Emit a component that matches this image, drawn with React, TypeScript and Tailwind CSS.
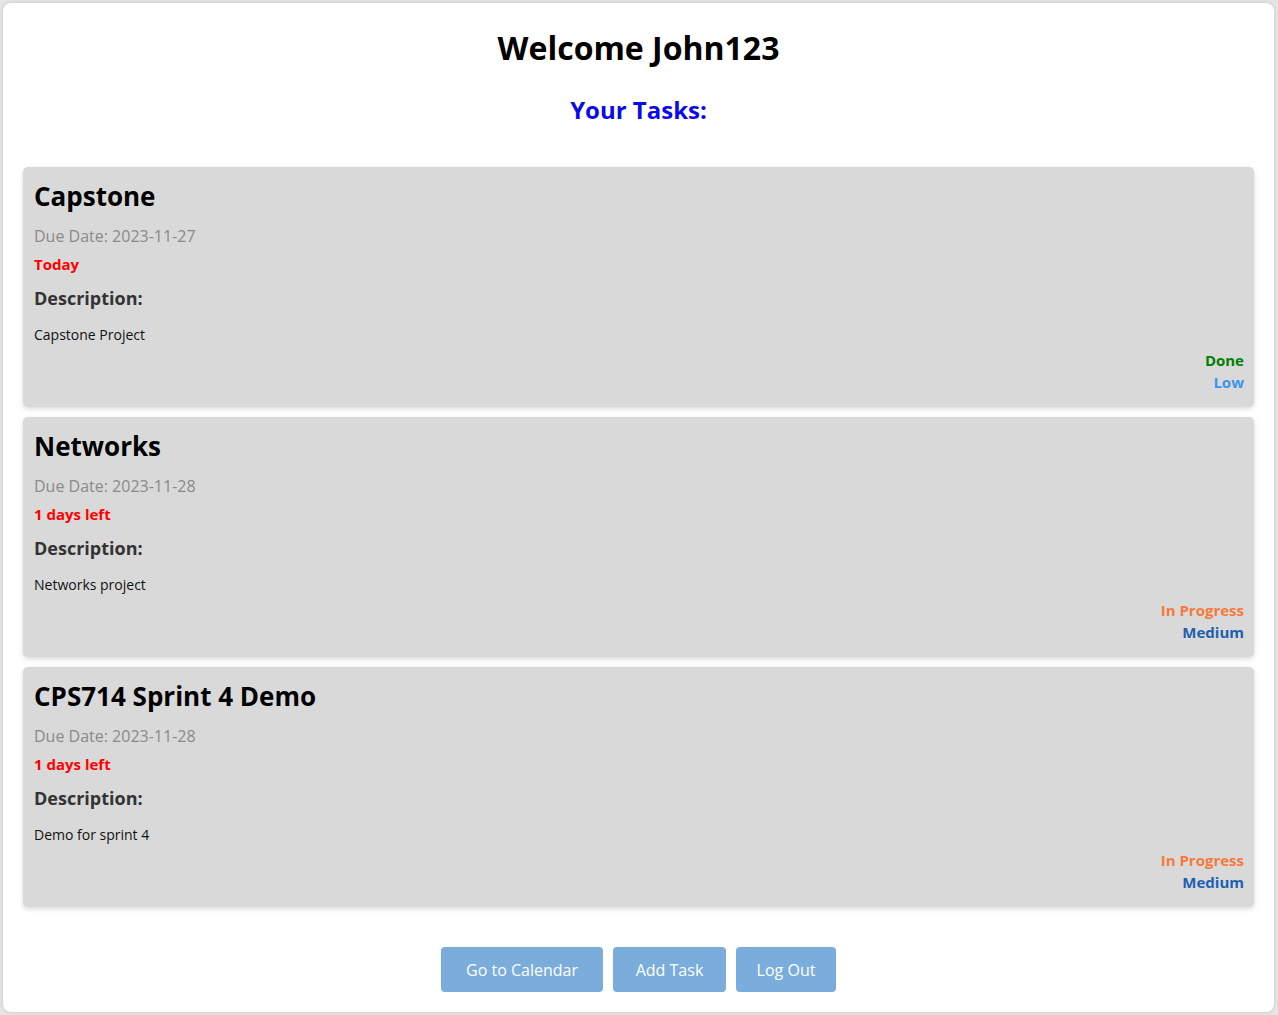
import React from "react"

type Task = {
  title: string
  due: string
  left: string
  description: string
  status: string
  statusColor: string
  priority: string
  priorityColor: string
}

const tasks: Task[] = [
  {
    title: "Capstone",
    due: "2023-11-27",
    left: "Today",
    description: "Capstone Project",
    status: "Done",
    statusColor: "text-[#008000]",
    priority: "Low",
    priorityColor: "text-[#3b95f0]",
  },
  {
    title: "Networks",
    due: "2023-11-28",
    left: "1 days left",
    description: "Networks project",
    status: "In Progress",
    statusColor: "text-[#f7793c]",
    priority: "Medium",
    priorityColor: "text-[#1f5fb0]",
  },
  {
    title: "CPS714 Sprint 4 Demo",
    due: "2023-11-28",
    left: "1 days left",
    description: "Demo for sprint 4",
    status: "In Progress",
    statusColor: "text-[#f7793c]",
    priority: "Medium",
    priorityColor: "text-[#1f5fb0]",
  },
]

const TaskCard = ({ task }: { task: Task }) => (
  <div className="bg-[#d9d9d9] rounded-[5px] shadow-[0_2px_5px_rgba(0,0,0,0.15)] pl-[11px] pr-[10px] pt-[10px] pb-[13px]">
    <h2 className="text-[26px] leading-[39px] font-bold text-black">{task.title}</h2>
    <p className="mt-[8px] text-[16px] leading-[24px] text-[#8a8a8a]">Due Date: {task.due}</p>
    <p className="mt-[5px] text-[15px] leading-[22px] font-bold text-[#ff0000]">{task.left}</p>
    <h3 className="mt-[10px] text-[18px] leading-[27px] font-bold text-[#333333]">Description:</h3>
    <p className="mt-[12px] text-[14px] leading-[21px] text-[#111111]">{task.description}</p>
    <div className="flex flex-col items-end mt-[4px]">
      <span className={`text-[15px] leading-[22px] font-bold ${task.statusColor}`}>{task.status}</span>
      <span className={`text-[15px] leading-[23px] font-bold ${task.priorityColor}`}>{task.priority}</span>
    </div>
  </div>
)

export default function App() {
  return (
    <div
      className="min-h-screen bg-[#e6e6e6] pt-[3px] pl-[3px] pr-[4px] pb-[3px]"
      style={{ fontFamily: '"Open Sans", "Liberation Sans", sans-serif' }}
    >
      <div className="bg-white rounded-lg shadow-[0_0_4px_rgba(0,0,0,0.15)] pl-[20px] pr-[20px] pb-5">
        <h1 className="pt-[25px] text-center text-[32px] leading-[40px] font-bold text-black">Welcome John123</h1>
        <h2 className="mt-[24px] text-center text-[24px] leading-[36px] font-bold text-[#0a0aeb]">Your Tasks:</h2>
        <div className="mt-[39px] flex flex-col gap-[10px]">
          {tasks.map((t) => (
            <TaskCard key={t.title} task={t} />
          ))}
        </div>
        <div className="mt-[40px] flex justify-center gap-[10px]">
          <button className="h-[45px] w-[162px] rounded-[4px] bg-[#7aaddc] text-white text-[16px]">Go to Calendar</button>
          <button className="h-[45px] w-[113px] rounded-[4px] bg-[#7aaddc] text-white text-[16px]">Add Task</button>
          <button className="h-[45px] w-[100px] rounded-[4px] bg-[#7aaddc] text-white text-[16px]">Log Out</button>
        </div>
      </div>
    </div>
  )
}
